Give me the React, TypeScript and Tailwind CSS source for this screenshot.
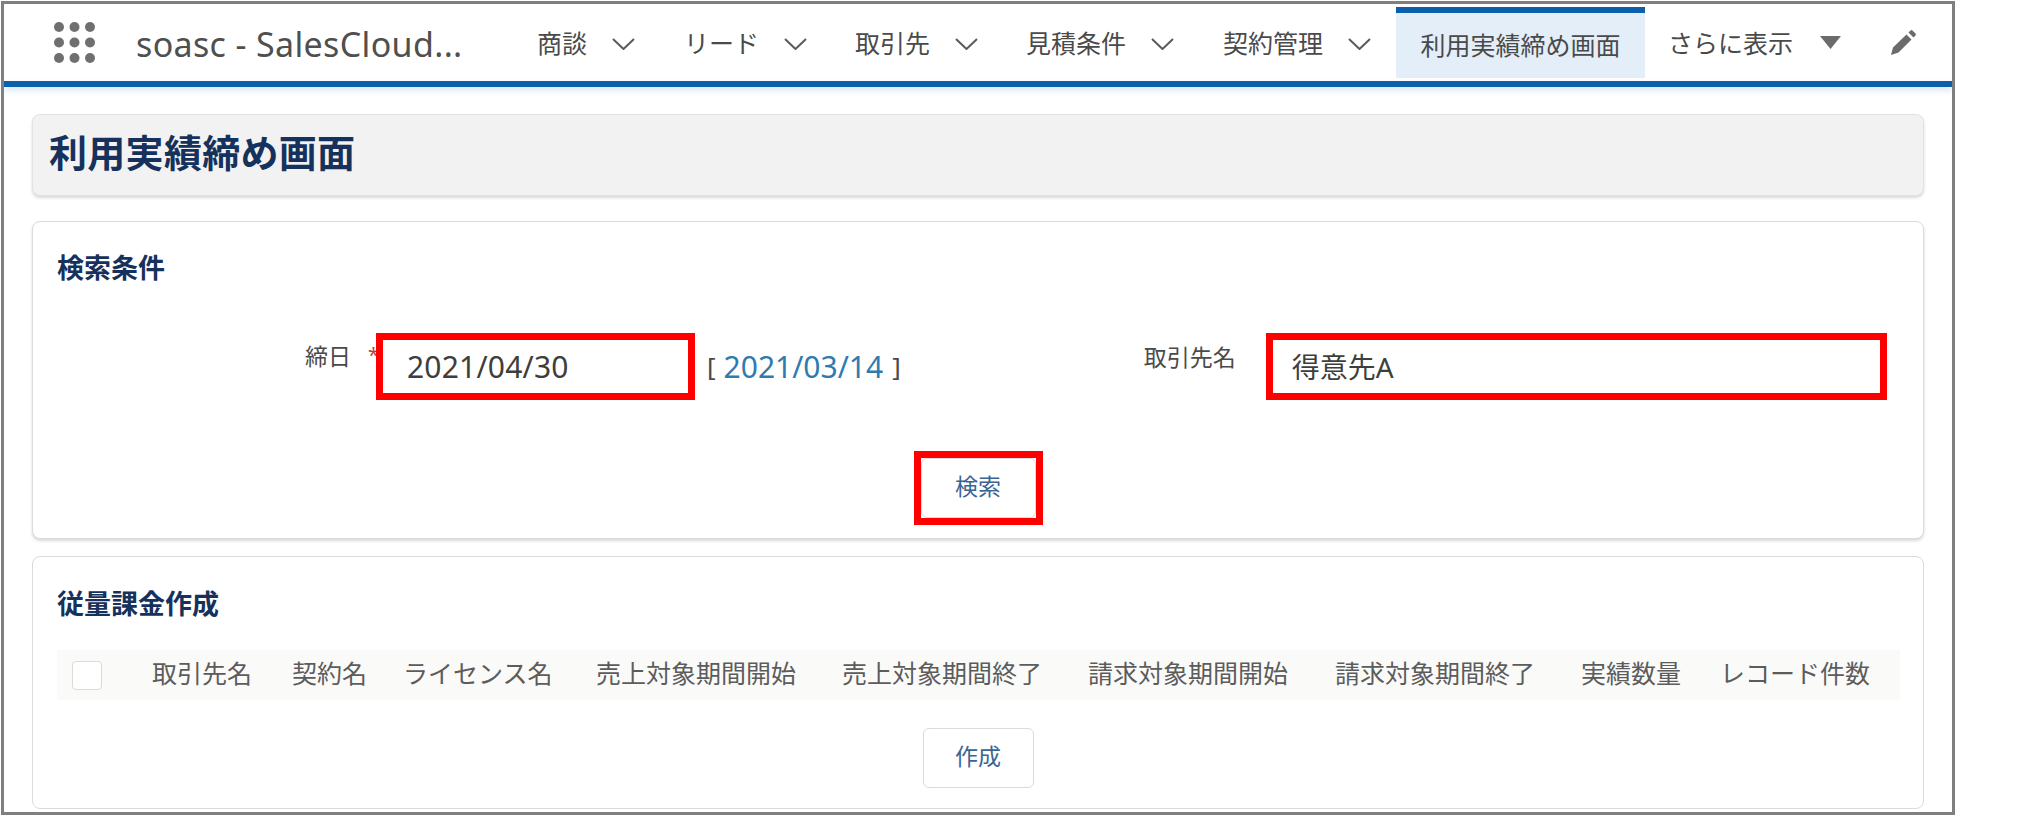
import type { ReactNode } from 'react'

const HEADERS = ['取引先名', '契約名', 'ライセンス名', '売上対象期間開始', '売上対象期間終了', '請求対象期間開始', '請求対象期間終了', '実績数量', 'レコード件数']

function AppGrid() {
  const dots = [5, 20.5, 36]
  return (
    <svg width="41" height="41" viewBox="0 0 41 41" className="shrink-0">
      {dots.map((cy) =>
        dots.map((cx) => <ellipse key={`${cx}-${cy}`} cx={cx} cy={cy} rx="5" ry="5" fill="#6f6f6f" />)
      )}
    </svg>
  )
}

function Chevron() {
  return (
    <svg width="23" height="12" viewBox="0 0 23 12" className="mt-[3px] shrink-0">
      <path d="M1 1 L11.5 11 L22 1" fill="none" stroke="#5a5a5a" strokeWidth="2" />
    </svg>
  )
}

function NavItem({ label, className }: { label: string; className: string }) {
  return (
    <div className={`flex items-center gap-[25px] ${className}`}>
      <span className="mt-[2px]">{label}</span>
      <Chevron />
    </div>
  )
}

function Card({ className, children }: { className: string; children: ReactNode }) {
  return <section className={`rounded-lg border border-[#dddbda] bg-white ${className}`}>{children}</section>
}

function Button({ label, className }: { label: string; className?: string }) {
  return (
    <button className={`flex h-[60px] items-center justify-center rounded-md border border-[#dddbda] bg-white pb-[4px] text-[23px] text-[#3a6593] ${className ?? ''}`}>
      {label}
    </button>
  )
}

export default function App() {
  return (
    <div className="h-[820px] w-[2027px] overflow-hidden bg-white pl-px pt-px font-['Noto_Sans','Noto_Sans_CJK_JP',sans-serif]">
      <div className="h-[814px] w-[1954px] overflow-hidden border-[3px] border-[#7f7f7f] bg-white">
        {/* Navigasi atas */}
        <header className="flex h-[77px] items-center pl-[50px] text-[25px] text-[#4a4a4a]">
          <AppGrid />
          <span className="ml-[41px] mt-[4px] w-[326px] whitespace-nowrap text-[34px] tracking-[0.35px] text-[#4f4f4f]">soasc - SalesCloud...</span>
          <NavItem label="商談" className="ml-[75px]" />
          <NavItem label="リード" className="ml-[49px]" />
          <NavItem label="取引先" className="ml-[48px]" />
          <NavItem label="見積条件" className="ml-[48px]" />
          <NavItem label="契約管理" className="ml-[49px]" />
          <div className="ml-[25px] mt-[3px] flex h-[71px] w-[249px] items-center justify-center self-start border-t-[6px] border-[#0b5fab] bg-[#e3eef8]">
            利用実績締め画面
          </div>
          <span className="ml-[23px] mt-[2px]">さらに表示</span>
          <svg width="21" height="13" viewBox="0 0 21 13" className="ml-[27px] shrink-0">
            <path d="M0 0 H21 L10.5 13 Z" fill="#6b6b6b" />
          </svg>
          <svg width="25" height="25" viewBox="0 0 25 25" className="ml-[50px] shrink-0">
            <path d="M2 17.5 L15.5 4.5 L20.5 9.5 L7.5 22.5 L0 25 Z M17.5 2.5 L19.5 0.5 Q20.5 -0.3 21.5 0.5 L24.5 3.5 Q25.3 4.5 24.5 5.5 L22.5 7.5 Z" fill="#6b6b6b" />
          </svg>
        </header>
        <div className="h-[6px] bg-[#0b5fab] shadow-[0_3px_6px_rgba(11,95,171,0.18)]" />

        <main className="flex flex-col px-[28px] pt-[27px]">
          <div className="flex h-[82px] items-center rounded-lg border border-[#e4e2e1] bg-[#f3f2f2] pb-[5px] pl-[16px] text-[38px] font-bold tracking-[0.3px] text-[#16325c] shadow-[0_2px_3px_rgba(0,0,0,0.15)]">
            利用実績締め画面
          </div>

          {/* Kondisi pencarian */}
          <Card className="mt-[25px] h-[318px] shadow-[0_2px_3px_rgba(0,0,0,0.15)]">
            <h2 className="ml-[24px] mt-[31px] h-[30px] text-[27px] font-bold leading-[30px] text-[#16325c]">検索条件</h2>
            <div className="mt-[50px] flex h-[67px] text-[#4a4a4a]">
              <span className="ml-[272px] mt-[6px] text-[23px] leading-[34px]">締日</span>
              <span className="ml-[17px] mt-[7px] w-[8px] text-[20px] leading-[30px] text-[#c23934]">*</span>
              <div className="flex w-[319px] items-center border-[7px] border-[#ff0000] pl-[24px] text-[30px] tracking-[0.2px] text-[#3e3e3c]">2021/04/30</div>
              <div className="ml-[12px] flex items-center text-[30px]">
                <span className="text-[26px]">[</span>
                <span className="ml-[8px] text-[#2f7bb0]">2021/03/14</span>
                <span className="ml-[9px] text-[26px]">]</span>
              </div>
              <span className="ml-[243px] mt-[7px] text-[23px] leading-[34px]">取引先名</span>
              <div className="ml-[30px] flex w-[621px] items-center border-[7px] border-[#ff0000] pl-[19px] text-[28px] text-[#3e3e3c]">得意先A</div>
            </div>
            <div className="mt-[51px] flex justify-center">
              <div className="border-[7px] border-[#ff0000]">
                <Button label="検索" className="w-[115px]" />
              </div>
            </div>
          </Card>

          {/* Pembuatan tagihan */}
          <Card className="mt-[17px] h-[253px]">
            <h2 className="ml-[24px] mt-[32px] h-[30px] text-[27px] font-bold leading-[30px] text-[#16325c]">従量課金作成</h2>
            <div className="ml-[24px] mr-[23px] mt-[31px] grid h-[50px] grid-cols-[95px_140px_111px_193px_246px_246px_247px_246px_139px_1fr] items-center bg-[#fafaf9] pb-[2px] text-[25px] text-[#5c5c5c]">
              <div className="ml-[15px] mt-[2px] h-[29px] w-[30px] rounded-[4px] border border-[#dddbda] bg-white" />
              {HEADERS.map((h) => (
                <span key={h} className="whitespace-nowrap">{h}</span>
              ))}
            </div>
            <div className="mt-[28px] flex justify-center">
              <Button label="作成" className="w-[111px]" />
            </div>
          </Card>
        </main>
      </div>
    </div>
  )
}
